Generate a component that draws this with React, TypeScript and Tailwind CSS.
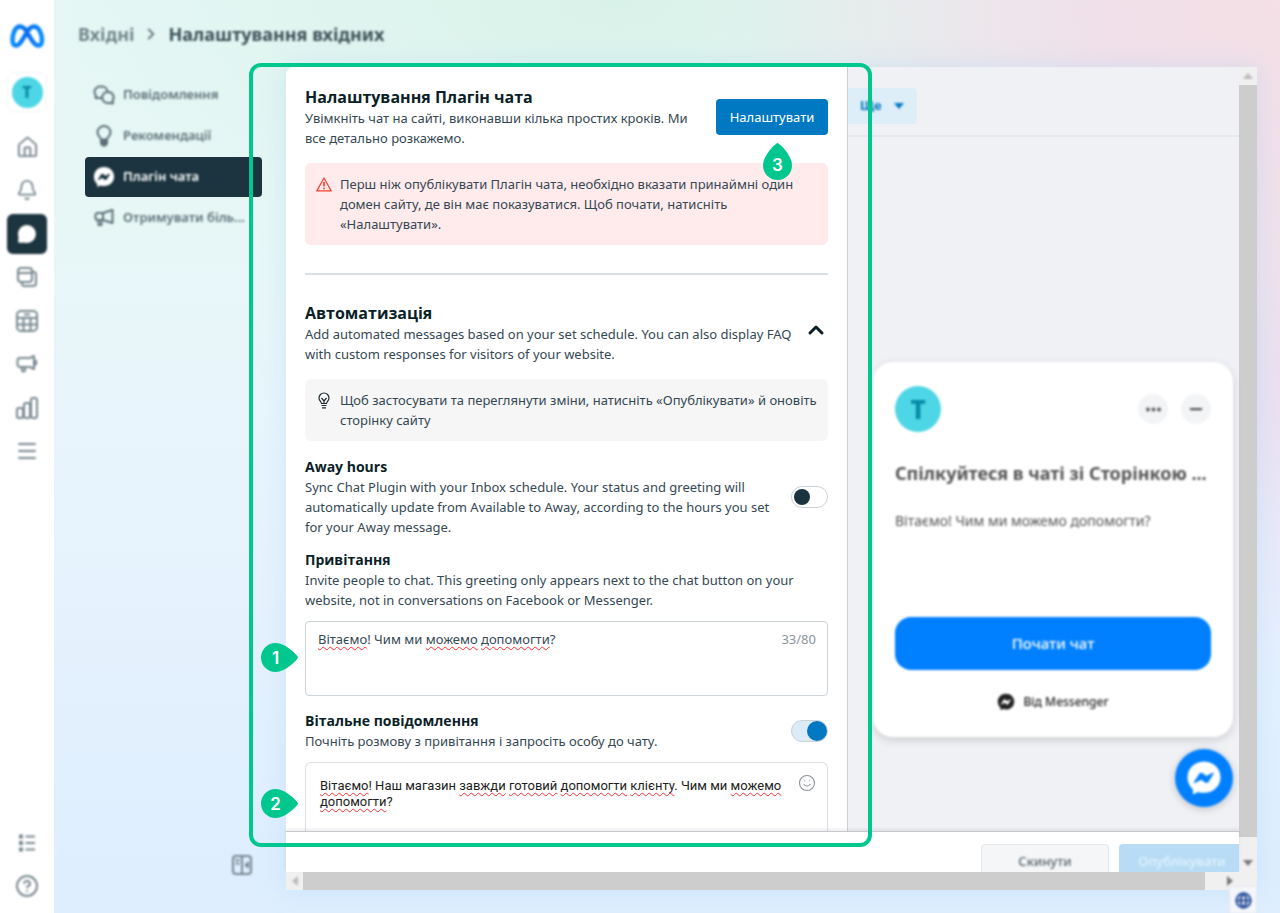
import type { ReactNode } from "react";
import { Bell, ChevronRight, ChevronUp, CircleQuestionMark, Ellipsis, Globe, House, Menu, Minus, Smile } from "lucide-react";
import { clsx } from "clsx";

const MetaLogo = () => (
  <svg viewBox="0 0 36 24" className="w-9 h-6" fill="none">
    <defs>
      <linearGradient id="meta" x1="0" y1="0" x2="1" y2="0">
        <stop offset="0" stopColor="#0a8dff" />
        <stop offset="0.5" stopColor="#0a6cf0" />
        <stop offset="1" stopColor="#0a8dff" />
      </linearGradient>
    </defs>
    <path
      d="M18 8C15.500 4 13.500 2.500 11 2.500C6 2.500 3.500 10 3.500 16C3.500 19.500 5 21.500 7.300 21.500C10 21.500 12 18.500 18 8C20.500 4 22.500 2.500 25 2.500C30 2.500 33 10 33 16C33 19.500 31.500 21.500 29.200 21.500C26 21.500 24 18.500 18 8Z"
      stroke="url(#meta)"
      strokeWidth="4.500"
      strokeLinejoin="round"
    />
  </svg>
);

const MessengerIcon = ({ className, bolt }: { className: string; bolt: string }) => (
  <svg viewBox="0 0 24 24" className={className}>
    <path
      fill="currentColor"
      d="M12 1C5.700 1 1 5.600 1 11.600c0 3.300 1.400 6 3.600 8V23l3.400-1.700c1.200.4 2.600.6 4 .6 6.300 0 11-4.500 11-10.400S18.300 1 12 1Z"
    />
    <path
      className={bolt}
      d="M5.300 14.700 8.700 9.300c.6-.9 1.800-1.100 2.600-.4l2.300 1.800 4.100-2.200c.5-.3 1 .3.700.7l-3.300 5.300c-.6.9-1.700 1.100-2.600.4l-2.400-1.800-4.100 2.300c-.5.2-1-.3-.7-.7Z"
    />
  </svg>
);

const ChatIcon = () => (
  <svg viewBox="0 0 20 20" className="w-5 h-5 text-white">
    <path fill="currentColor" d="M10 1a9 9 0 1 1-2 17.800H2.200a1 1 0 0 1-1-1.200L1.500 13A9 9 0 0 1 10 1Z" />
  </svg>
);

const PostsIcon = () => (
  <svg viewBox="0 0 22 22" className="w-[22px] h-[22px]" fill="none" stroke="currentColor" strokeWidth="2">
    <rect x="2" y="2" width="14" height="14" rx="3" />
    <path d="M2 7h14M6 16v1.500A2.500 2.500 0 0 0 8.500 20H17a3 3 0 0 0 3-3V8.500A2.500 2.500 0 0 0 17.500 6H16" />
  </svg>
);

const PlannerIcon = () => (
  <svg viewBox="0 0 22 22" className="w-[22px] h-[22px]" fill="none" stroke="currentColor" strokeWidth="2">
    <rect x="1" y="1" width="20" height="20" rx="4" />
    <path d="M1 8h20M1 14.500h20M7.500 8v13M14.500 8v13M8 4.500h6" />
  </svg>
);

const AdsIcon = () => (
  <svg viewBox="0 0 22 20" className="w-[22px] h-5" fill="none" stroke="currentColor" strokeWidth="2" strokeLinejoin="round">
    <path d="M4 4h10l4-2v13l-4-2H4a2.500 2.500 0 0 1-2.500-2.500v-4A2.500 2.500 0 0 1 4 4ZM6 13v3a1.500 1.500 0 0 0 3 0v-3M18 6c3 0 3 5 0 5" />
  </svg>
);

const InsightsIcon = () => (
  <svg viewBox="0 0 22 22" className="w-[22px] h-[22px]" fill="none" stroke="currentColor" strokeWidth="2">
    <rect x="1" y="11" width="6" height="10" rx="2" />
    <rect x="8" y="6" width="6" height="15" rx="2" />
    <rect x="15" y="1" width="6" height="20" rx="2" />
  </svg>
);

const ListIcon = () => (
  <svg viewBox="0 0 18 18" className="w-[18px] h-[18px]" fill="none" stroke="currentColor">
    <path d="M1 2.500h4M1 9h4M1 15.500h4" strokeWidth="4" />
    <path d="M7.500 2.500H17M7.500 9H17M7.500 15.500H17" strokeWidth="2" />
  </svg>
);

const CollapseIcon = () => (
  <svg viewBox="0 0 20 20" className="w-5 h-5" fill="none" stroke="currentColor" strokeWidth="2">
    <rect x="1" y="1" width="18" height="18" rx="3" />
    <path d="M10 1v18M3.500 5h4M3.500 8.500h4" />
    <path d="M17 6v8l-5-4Z" fill="currentColor" stroke="none" />
  </svg>
);

const BubblesIcon = () => (
  <svg viewBox="0 0 22 20" className="w-[22px] h-5" fill="none" stroke="currentColor" strokeWidth="2" strokeLinejoin="round">
    <path d="M9 13H2.500L3 10.800A5.500 5.500 0 0 1 1.500 7 5.500 5.500 0 0 1 7 1.500h2a5.500 5.500 0 0 1 5.500 5" />
    <path d="M15 7a5.500 5.300 0 0 1 4.500 8.500l.5 3-3.500-.6H14A5.500 5.500 0 0 1 14 7Z" />
  </svg>
);

const TipsIcon = () => (
  <svg viewBox="0 0 18 22" className="w-[18px] h-[22px]" fill="none" stroke="currentColor" strokeWidth="2" strokeLinejoin="round">
    <path d="M6 14.500C6 12 2.500 11.500 2.500 7.500a6.500 6.500 0 0 1 13 0c0 4-3.500 4.500-3.500 7Z" />
    <path d="M6 15h6v3.500l-1.500 2h-3L6 18.500Z" fill="currentColor" />
  </svg>
);

const PromoteIcon = () => (
  <svg viewBox="0 0 20 18" className="w-5 h-[18px]" fill="none" stroke="currentColor" strokeWidth="2" strokeLinejoin="round">
    <path d="M9 4 18.500 1v13L9 11H3.500A2 2 0 0 1 1.500 9V6a2 2 0 0 1 2-2H9Zm0 0v7M4.500 11v5h3v-5" />
  </svg>
);

const WarningIcon = () => (
  <svg viewBox="0 0 16 15" className="w-4 h-[15px]" fill="none" stroke="#fa3e2e" strokeLinejoin="round">
    <path d="M8 1 15.200 13.900H.8L8 1Z" strokeWidth="1.200" />
    <path d="M8 5v4.500M8 10.800v1.400" strokeWidth="1.700" />
  </svg>
);

const BulbIcon = () => (
  <svg viewBox="0 0 14 17" className="w-3.5 h-[17px]" fill="none" stroke="#1c2b33" strokeWidth="1.200" strokeLinejoin="round">
    <path d="M4.500 11.500C4.500 10 2 9 2 6a5 5 0 0 1 10 0c0 3-2.500 4-2.500 5.500Z" />
    <path d="M4.500 6 7 9l2.500-3M7 9v2.500M4.500 13.500h5M5 15.800h4" />
  </svg>
);

const Arrow = ({ className }: { className?: string }) => (
  <svg viewBox="0 0 10 6" className={clsx("w-2.5 h-1.5", className)} fill="currentColor">
    <path d="M0 0h10L5 6Z" />
  </svg>
);

// numbered drop, the tip points right by default
const Marker = ({ n, up, className }: { n: number; up?: boolean; className: string }) => (
  <span className={clsx("absolute z-20 flex", up ? "w-[29px] h-[37px]" : "w-[37px] h-[29px]", className)}>
    <svg viewBox={up ? "0 0 29 37" : "0 0 37 29"} className="absolute inset-0 w-full h-full" fill="#00c78e">
      {up ? (
        <path d="M14.500 0C16 0 29 12 29 22.500a14.500 14.500 0 0 1-29 0C0 12 13 0 14.500 0Z" />
      ) : (
        <path d="M37 14.500C37 16 25 29 14.500 29a14.500 14.500 0 0 1 0-29C25 0 37 13 37 14.500Z" />
      )}
    </svg>
    <span
      className={clsx(
        "relative w-[29px] h-[29px] flex items-center justify-center text-white text-[17px] font-semibold font-['Inter',sans-serif]",
        up && "mt-[7px]"
      )}
    >
      {n}
    </span>
  </span>
);

const Misspelled = ({ children }: { children: ReactNode }) => (
  <span className="underline decoration-wavy decoration-red-500 decoration-1 underline-offset-2 [text-decoration-skip-ink:none]">
    {children}
  </span>
);

const Toggle = ({ label, checked }: { label: string; checked?: boolean }) => (
  <input
    type="checkbox"
    aria-label={label}
    defaultChecked={checked}
    className="appearance-none shrink-0 w-[37px] h-[22px] rounded-full border border-[#cbd2d9] bg-white flex items-center before:block before:w-4 before:h-4 before:ml-0.5 before:rounded-full before:bg-[#1c343f] checked:bg-[#dbebf7] checked:justify-end checked:before:w-5 checked:before:h-5 checked:before:bg-[#0078c2]"
  />
);

const railItems = [
  { label: "Home", icon: <House size={23} /> },
  { label: "Notifications", icon: <Bell size={22} /> },
  { label: "Inbox", icon: <ChatIcon />, active: true },
  { label: "Posts", icon: <PostsIcon /> },
  { label: "Planner", icon: <PlannerIcon /> },
  { label: "Ads", icon: <AdsIcon /> },
  { label: "Insights", icon: <InsightsIcon /> },
  { label: "All tools", icon: <Menu size={24} /> },
];

const navItems = [
  { label: "Повідомлення", icon: <BubblesIcon /> },
  { label: "Рекомендації", icon: <TipsIcon /> },
  { label: "Плагін чата", icon: <MessengerIcon className="w-[22px] h-[22px]" bolt="fill-[#1c343f]" />, active: true },
  { label: "Отримувати біль...", icon: <PromoteIcon /> },
];

function Rail() {
  return (
    <aside className="w-[54px] shrink-0 bg-white flex flex-col items-center text-[#788890]">
      <a href="#" aria-label="Meta" className="mt-6 blur-[1px]">
        <MetaLogo />
      </a>
      <button
        aria-label="Account"
        className="mt-6 w-10 h-10 rounded-md border border-gray-100 flex items-center justify-center blur-[1px]"
      >
        <span className="w-[31px] h-[31px] rounded-full bg-[#4dd6e5] text-[#0689a5] font-extrabold flex items-center justify-center">
          T
        </span>
      </button>
      <nav className="mt-[15px] h-[344px] flex flex-col justify-between blur-[1px]">
        {railItems.map((item) => (
          <a
            href="#"
            key={item.label}
            aria-label={item.label}
            className={clsx("w-10 h-10 rounded-md flex items-center justify-center", item.active && "bg-[#1c343f]")}
          >
            {item.icon}
          </a>
        ))}
      </nav>
      <div className="mt-auto mb-[15px] flex flex-col items-center gap-[22px] blur-[1px]">
        <button aria-label="List">
          <ListIcon />
        </button>
        <button aria-label="Help">
          <CircleQuestionMark size={24} />
        </button>
      </div>
    </aside>
  );
}

function SideNav() {
  return (
    <div className="w-[232px] shrink-0 pl-[31px] flex flex-col">
      <nav className="mt-2 mr-6 flex flex-col gap-px">
        {navItems.map((item) => (
          <a
            href="#"
            key={item.label}
            className={clsx(
              "h-10 pl-2 rounded flex items-center text-[13px] font-semibold whitespace-nowrap",
              item.active ? "bg-[#1c343f] text-white" : "text-[#5c6f77]"
            )}
          >
            <span className="flex items-center blur-[1px]">
              <span className="w-[22px] mr-2 flex justify-center">{item.icon}</span>
              {item.label}
            </span>
          </a>
        ))}
      </nav>
      <button aria-label="Collapse" className="mt-auto mb-[38px] mr-[34px] self-end text-[#788890] blur-[1px]">
        <CollapseIcon />
      </button>
    </div>
  );
}

function Settings() {
  return (
    <div className="relative w-[562px] shrink-0 min-h-0 flex flex-col bg-white rounded-tl-lg border-r border-[#ccd0d5] px-[19px] pt-[19px] text-[13px] leading-5 text-[#344854]">
      <div className="flex items-start justify-between">
        <div>
          <h1 className="text-base leading-[22px] font-bold font-['Open_Sans',sans-serif] text-[#0a1f28]">
            Налаштування Плагін чата
          </h1>
          <p>
            Увімкніть чат на сайті, виконавши кілька простих кроків. Ми
            <br />
            все детально розкажемо.
          </p>
        </div>
        <div className="relative mt-[13px]">
          <button className="w-28 h-9 rounded bg-[#0078c2] text-white">Налаштувати</button>
          <Marker n={3} up className="top-11 right-9" />
        </div>
      </div>

      <div className="mt-[15px] pl-[11px] py-[11px] rounded-md bg-[#ffebeb] flex gap-2">
        <span className="w-4 mt-[3px]">
          <WarningIcon />
        </span>
        <p>
          Перш ніж опублікувати Плагін чата, необхідно вказати принаймні один
          <br />
          домен сайту, де він має показуватися. Щоб почати, натисніть
          <br />
          «Налаштувати».
        </p>
      </div>

      <hr className="mt-7 border-t-2 border-[#dadfe3]" />

      <div className="mt-[27px] flex justify-between">
        <div>
          <h2 className="text-base leading-[22px] font-bold font-['Open_Sans',sans-serif] text-[#0a1f28]">Автоматизація</h2>
          <p>
            Add automated messages based on your set schedule. You can also display FAQ
            <br />
            with custom responses for visitors of your website.
          </p>
        </div>
        <button aria-label="Collapse section" className="self-start mt-4 text-[#0a1f28]">
          <ChevronUp size={24} strokeWidth={3} />
        </button>
      </div>

      <div className="mt-[15px] pl-3 py-[11px] rounded-md bg-[#f6f6f6] flex gap-2">
        <span className="w-[15px] mt-0.5">
          <BulbIcon />
        </span>
        <p>
          Щоб застосувати та переглянути зміни, натисніть «Опублікувати» й оновіть
          <br />
          сторінку сайту
        </p>
      </div>

      <div className="mt-4 flex items-center justify-between">
        <div>
          <h3 className="text-sm leading-5 font-bold font-['Open_Sans',sans-serif] text-[#0a1f28]">Away hours</h3>
          <p>
            Sync Chat Plugin with your Inbox schedule. Your status and greeting will
            <br />
            automatically update from Available to Away, according to the hours you set
            <br />
            for your Away message.
          </p>
        </div>
        <Toggle label="Away hours" />
      </div>

      <h3 className="mt-[13px] text-sm leading-5 font-bold font-['Open_Sans',sans-serif] text-[#0a1f28]">Привітання</h3>
      <p>
        Invite people to chat. This greeting only appears next to the chat button on your
        <br />
        website, not in conversations on Facebook or Messenger.
      </p>
      <div className="relative mt-[11px] h-[75px] shrink-0">
        <textarea
          aria-label="Привітання"
          spellCheck={false}
          defaultValue="Вітаємо! Чим ми можемо допомогти?"
          className="block w-full h-full px-3 py-[7px] resize-none rounded border border-[#ccd3d9] bg-white"
        />
        <div aria-hidden="true" className="absolute inset-0 px-[13px] py-2 text-transparent pointer-events-none">
          <Misspelled>Вітаємо</Misspelled>! Чим ми <Misspelled>можемо</Misspelled> <Misspelled>допомогти</Misspelled>?
        </div>
        <span className="absolute top-2 right-3 text-[#8a949b]">33/80</span>
        <Marker n={1} className="top-[22px] -left-11" />
      </div>

      <div className="mt-[15px] flex items-center justify-between">
        <div>
          <h3 className="text-sm leading-5 font-bold font-['Open_Sans',sans-serif] text-[#0a1f28]">Вітальне повідомлення</h3>
          <p>Почніть розмову з привітання і запросіть особу до чату.</p>
        </div>
        <Toggle label="Вітальне повідомлення" checked />
      </div>
      <div className="relative mt-[11px] flex-1 min-h-0 text-[13px] leading-4 font-['Roboto',sans-serif] text-[#1c1e21]">
        <textarea
          aria-label="Вітальне повідомлення"
          spellCheck={false}
          defaultValue={"Вітаємо! Наш магазин завжди готовий допомогти клієнту. Чим ми можемо\nдопомогти?"}
          className="block w-full h-full px-3.5 pt-[15px] resize-none overflow-hidden rounded-t-md border border-b-0 border-[#dddfe2] bg-white"
        />
        <div aria-hidden="true" className="absolute inset-0 px-[15px] pt-4 text-transparent pointer-events-none">
          <Misspelled>Вітаємо</Misspelled>! Наш магазин <Misspelled>завжди</Misspelled> <Misspelled>готовий</Misspelled>{" "}
          <Misspelled>допомогти</Misspelled> <Misspelled>клієнту</Misspelled>. Чим ми <Misspelled>можемо</Misspelled>
          <br />
          <Misspelled>допомогти</Misspelled>?
        </div>
        <button aria-label="Emoji" className="absolute top-3 right-3 text-[#8a949b]">
          <Smile size={18} strokeWidth={1.5} />
        </button>
        <Marker n={2} className="top-[27px] -left-11" />
      </div>
    </div>
  );
}

function Preview() {
  return (
    <div className="flex-1 min-w-0 bg-[#f0f1f5] flex flex-col">
      <div className="h-[70px] shrink-0 pt-[21px] border-b-2 border-[#e4e7eb]">
        <button className="w-[69px] h-9 pl-3 rounded-r bg-[#deeef8] text-[#0078c2] text-[13px] font-bold flex items-center gap-3">
          <span className="blur-[1px]">Ще</span>
          <Arrow className="blur-[1px]" />
        </button>
      </div>
      <div className="flex-1 pr-1.5 pb-6 flex flex-col justify-end items-end gap-3 blur-[1px]">
        <div className="w-[360px] px-[22px] pt-6 pb-[23px] rounded-[20px] bg-white shadow-[0_3px_10px_rgba(0,0,0,0.15)] text-[#555]">
          <div className="flex items-center">
            <span className="w-[46px] h-[46px] rounded-full bg-[#4dd6e5] text-[#0689a5] text-[26px] font-extrabold flex items-center justify-center">
              T
            </span>
            <button aria-label="More" className="ml-auto w-[30px] h-[30px] rounded-full bg-gray-100 flex items-center justify-center">
              <Ellipsis size={19} strokeWidth={3} />
            </button>
            <button aria-label="Minimize" className="ml-[13px] w-[30px] h-[30px] rounded-full bg-gray-100 flex items-center justify-center">
              <Minus size={18} strokeWidth={3} />
            </button>
          </div>
          <p className="mt-[29px] text-lg leading-6 font-bold whitespace-nowrap">Спілкуйтеся в чаті зі Сторінкою ...</p>
          <p className="mt-[26px] text-sm leading-5">Вітаємо! Чим ми можемо допомогти?</p>
          <button className="mt-[86px] w-full h-[53px] rounded-2xl bg-[#0080ff] text-white text-[15px] font-medium">Почати чат</button>
          <p className="mt-5 flex items-center justify-center gap-2 text-xs leading-6 font-medium text-[#222]">
            <MessengerIcon className="w-[18px] h-[18px]" bolt="fill-white" />
            Від Messenger
          </p>
        </div>
        <button
          aria-label="Messenger"
          className="w-[58px] h-[58px] rounded-full bg-[#0080ff] text-white shadow-[0_2px_8px_rgba(0,0,0,0.2)] flex items-center justify-center"
        >
          <MessengerIcon className="w-9 h-9" bolt="fill-[#0080ff]" />
        </button>
      </div>
    </div>
  );
}

export default function App() {
  return (
    <div className="h-screen min-h-[880px] flex overflow-hidden font-['Noto_Sans',sans-serif] bg-[radial-gradient(45%_60%_at_100%_0%,#f4e0e6_0%,#f1e0e9_30%,transparent_100%),radial-gradient(20%_35%_at_100%_40%,#e8dff5_0%,transparent_100%),radial-gradient(45%_30%_at_48%_0%,#d9f2e9_0%,transparent_100%),linear-gradient(180deg,#e6f7f6_0%,#e7f7f6_25%,#e8f5fc_45%,#e6f2fd_65%,#deeefe_95%)]">
      <Rail />
      <div className="flex-1 min-w-0 flex flex-col">
        <header className="h-[67px] shrink-0 pl-6 flex items-center gap-2 text-lg font-bold text-[#3a5058] blur-[1px]">
          <a href="#" className="text-[#71858b]">
            Вхідні
          </a>
          <ChevronRight size={18} strokeWidth={3} className="text-[#71858b]" />
          <span>Налаштування вхідних</span>
        </header>
        <div className="flex-1 min-h-0 flex">
          <SideNav />
          <div className="relative flex-1 min-w-0 mr-[23px] mb-[23px] flex flex-col rounded-tl-lg shadow-[0_0_24px_rgba(160,205,245,0.35)]">
            <div className="flex-1 min-h-0 flex">
              <div className="flex-1 min-w-0 flex flex-col">
                <div className="flex-1 min-h-0 flex">
                  <Settings />
                  <Preview />
                </div>
                <footer className="relative h-[41px] shrink-0 pt-3 bg-white border-t border-[#c5c9cd] shadow-[0_-2px_3px_rgba(0,0,0,0.08)] overflow-clip text-[13px] font-medium">
                  <div className="-mr-1.5 flex justify-end gap-2.5">
                    <button className="w-32 h-9 rounded bg-[#f5f6f8] border border-gray-200 text-[#55666e]">
                      <span className="block blur-[1px]">Скинути</span>
                    </button>
                    <button className="w-[126px] h-9 rounded bg-[#b8dcf5] text-[#e2f3fd]">
                      <span className="block blur-[1px]">Опублікувати</span>
                    </button>
                  </div>
                </footer>
              </div>
              <div className="w-[18px] shrink-0 bg-[#f0f0f0] flex flex-col text-[#777]">
                <div className="h-[18px] flex items-center justify-center text-[#bbb]">
                  <Arrow className="rotate-180 blur-[1px]" />
                </div>
                <div className="flex-1 bg-[#cdcdcd]" />
                <div className="h-[35px] pb-1.5 flex items-end justify-center">
                  <Arrow className="blur-[1px]" />
                </div>
              </div>
            </div>
            <div className="h-[18px] shrink-0 bg-[#f0f0f0] flex items-center text-[#777]">
              <div className="w-[17px] flex justify-center text-[#bbb]">
                <Arrow className="rotate-90 blur-[1px]" />
              </div>
              <div className="flex-1 h-full bg-[#cdcdcd]" />
              <div className="w-[52px] pl-5">
                <Arrow className="-rotate-90 blur-[1px]" />
              </div>
            </div>
            <button
              aria-label="Language"
              className="absolute -bottom-6 right-0 w-7 h-7 bg-[#f4f6fa] border border-gray-200 text-[#2f559f] flex items-center justify-center blur-[1px]"
            >
              <Globe size={17} strokeWidth={3} />
            </button>
            <div className="absolute z-10 -top-1 bottom-[43px] -left-[37px] w-[623px] rounded-xl border-4 border-[#00c78e] pointer-events-none" />
          </div>
        </div>
      </div>
    </div>
  );
}
